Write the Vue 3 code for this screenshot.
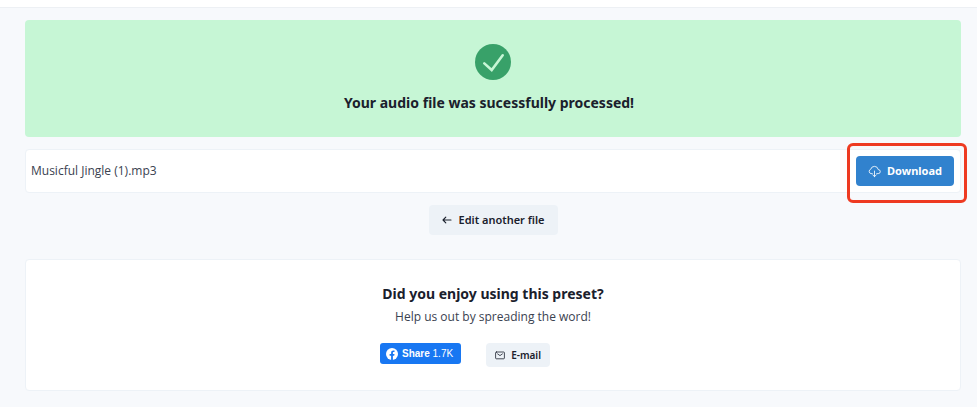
<script setup>
const fileName = 'Musicful Jingle (1).mp3'
const shareCount = '1.7K'
</script>

<template>
  <div class="page">
    <header class="topbar"></header>
    <main class="content">
      <section class="banner">
        <svg class="check" viewBox="0 0 36 36" aria-hidden="true">
          <circle cx="18" cy="18" r="18" fill="#38a169" />
          <path d="M9.3 19.4 16.7 26 27.7 11.3" fill="none" stroke="#c6f6d5" stroke-width="2.6" stroke-linecap="round" stroke-linejoin="miter" />
        </svg>
        <h1 class="title banner-title">Your audio file was sucessfully processed!</h1>
      </section>

      <section class="file">
        <span class="name">{{ fileName }}</span>
        <div class="marked">
          <button type="button" class="btn download">
            <svg class="cloud" viewBox="0 0 14 14" fill="none" stroke="currentColor" stroke-width=".9" stroke-linecap="round" stroke-linejoin="round" aria-hidden="true">
              <path d="M4.6 9.3H3.2A2.5 2.5 0 0 1 3 4.5 4.1 4.1 0 0 1 11 4.9 2.2 2.2 0 0 1 11 9.3H9.4M7 6.5V12.4M5.1 10.7 7 12.5 8.9 10.7" />
            </svg>
            Download
          </button>
        </div>
      </section>

      <button type="button" class="btn edit">
        <svg class="arrow" viewBox="0 0 10 10" fill="none" stroke="currentColor" stroke-width="1.1" stroke-linecap="round" stroke-linejoin="round" aria-hidden="true">
          <path d="M9 5H1M3.8 2.2 1 5 3.8 7.8" />
        </svg>
        Edit another file
      </button>

      <section class="card">
        <h2 class="title">Did you enjoy using this preset?</h2>
        <p class="help">Help us out by spreading the word!</p>
        <div class="actions">
          <button type="button" class="share">
            <svg class="fb" viewBox="0 0 12 12" aria-hidden="true">
              <circle cx="6" cy="6" r="6" fill="#fff" />
              <path d="M5.1 12V7.8H3.6V6.1H5.1V4.8C5.1 3.3 6 2.5 7.3 2.5 7.9 2.5 8.5 2.6 8.5 2.6V4H7.8C7.1 4 6.9 4.4 6.9 4.9V6.1H8.5L8.2 7.8H6.9V12Z" fill="#1877f2" />
            </svg>
            <span><b>Share</b> {{ shareCount }}</span>
          </button>
          <button type="button" class="btn email">
            <svg class="mail" viewBox="0 0 10 10" fill="none" stroke="currentColor" stroke-width=".8" stroke-linecap="round" stroke-linejoin="round" aria-hidden="true">
              <rect x=".6" y="2" width="8.8" height="6.8" rx=".8" />
              <path d="M2.6 3.9 5 5.6 7.4 3.9" />
            </svg>
            E-mail
          </button>
        </div>
      </section>
    </main>
  </div>
</template>

<style>
body {
  background: #f7f9fc;
}
</style>

<style scoped>
.page {
  color: #1a202c;
  font-family: "Noto Sans", "Open Sans", sans-serif;
  font-size: 12px;
  line-height: 18px;
}
.topbar {
  height: 7px;
  background: #fff;
  border-bottom: 1px solid #edf0f4;
}
.content {
  display: flex;
  flex-direction: column;
  align-items: center;
  padding: 12px 16px 15px 25px;
}
.banner,
.file,
.card {
  box-sizing: border-box;
  width: 100%;
  border-radius: 4px;
}
.banner {
  display: flex;
  flex-direction: column;
  align-items: center;
  gap: 12px;
  padding: 24px 16px;
  background: #c6f6d5;
}
.check {
  width: 36px;
  height: 36px;
}
.title {
  margin: 0;
  font-size: 14px;
  line-height: 21px;
  font-weight: 700;
}
.banner-title {
  padding-right: 8px;
}
.file {
  display: flex;
  align-items: center;
  justify-content: space-between;
  margin-top: 12px;
  padding: 6px 6px 6px 5px;
  background: #fff;
  border: 1px solid #edf2f7;
}
.name,
.help {
  color: #3a4250;
  font-family: "Open Sans", sans-serif;
  line-height: 20px;
}
.marked {
  position: relative;
}
.marked::after {
  content: "";
  position: absolute;
  inset: -13px -13px -17px -9px;
  border: 3px solid #ee3a21;
  border-radius: 6px;
  pointer-events: none;
}
.btn {
  display: flex;
  align-items: center;
  justify-content: center;
  border: 0;
  border-radius: 4px;
  background: #edf2f7;
  color: #1a202c;
  font: inherit;
  font-size: 11px;
  font-weight: 600;
}
.download {
  gap: 6px;
  height: 30px;
  padding: 0 12px;
  background: #3182ce;
  color: #fff;
  font-weight: 700;
}
.cloud {
  width: 13px;
  height: 13px;
}
.edit {
  gap: 7px;
  height: 30px;
  margin-top: 12px;
  padding: 0 13px;
}
.arrow,
.mail {
  width: 10px;
  height: 10px;
}
.card {
  display: flex;
  flex-direction: column;
  align-items: center;
  margin-top: 24px;
  padding: 23px 16px;
  background: #fff;
  border: 1px solid #edf2f7;
}
.help {
  margin: 3px 0 0;
}
.actions {
  display: flex;
  align-items: flex-start;
  gap: 25px;
  margin-top: 16px;
  padding-right: 56px;
}
.share {
  display: flex;
  align-items: center;
  gap: 4px;
  height: 21px;
  padding: 0 8px 0 6px;
  border: 0;
  border-radius: 3px;
  background: #1877f2;
  color: #fff;
  font: 10px/20px "Liberation Sans", sans-serif;
}
.fb {
  width: 12px;
  height: 12px;
}
.email {
  gap: 6px;
  height: 24px;
  padding: 0 9px;
  font-size: 10px;
}
</style>
